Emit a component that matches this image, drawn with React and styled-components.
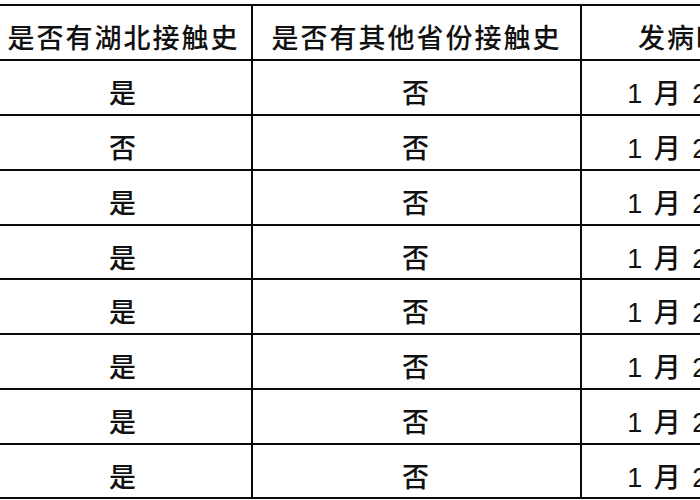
import React from "react";
import styled, { createGlobalStyle } from "styled-components";

const Global = createGlobalStyle`
  html, body { margin: 0; padding: 0; background: #ffffff; }
  body { width: 700px; height: 500px; overflow: hidden; }
`;

const Viewport = styled.div`
  width: 700px;
  height: 500px;
  overflow: hidden;
  background: #fff;
`;

const Table = styled.table`
  border-collapse: separate;
  border-spacing: 0;
  width: ${(p) => p.$width}px;
  min-width: ${(p) => p.$width}px;
  margin: 4px 0 0 -6px;
  border-top: 2px solid #0a0a0a;
  border-left: 2px solid #0a0a0a;
  table-layout: fixed;
  font-family: "Liberation Sans", "Noto Sans CJK SC", sans-serif;
  font-size: 27px;
  color: #111;
`;

const Col = styled.col`
  width: ${(p) => p.$w}px;
`;

const Cell = styled.td`
  box-sizing: border-box;
  height: ${(p) => p.$h}px;
  padding: 14px 0 0 0;
  border-right: 2px solid #0a0a0a;
  border-bottom: 2px solid #0a0a0a;
  text-align: center;
  vertical-align: middle;
  white-space: nowrap;
  overflow: hidden;
  line-height: 1;
  letter-spacing: 2px;
  font-weight: 500;
`;

const HeadCell = styled(Cell).attrs({ as: "th" })`
  font-weight: 500;
`;

const widths = [257, 329, 230];

const rows = [
  ["是", "否", "1 月 21 日", 55],
  ["否", "否", "1 月 22 日", 55],
  ["是", "否", "1 月 23 日", 55],
  ["是", "否", "1 月 22 日", 54],
  ["是", "否", "1 月 24 日", 55],
  ["是", "否", "1 月 25 日", 55],
  ["是", "否", "1 月 23 日", 55],
  ["是", "否", "1 月 26 日", 54],
];

export default function App() {
  return (
    <Viewport>
      <Global />
      <Table $width={widths.reduce((a, b) => a + b, 0) + 2}>
        <colgroup>
          {widths.map((w, i) => (
            <Col key={i} $w={w} />
          ))}
        </colgroup>
        <thead>
          <tr>
            <HeadCell $h={55}>是否有湖北接触史</HeadCell>
            <HeadCell $h={55}>是否有其他省份接触史</HeadCell>
            <HeadCell $h={55}>发病时间</HeadCell>
          </tr>
        </thead>
        <tbody>
          {rows.map(([a, b, c, h], i) => (
            <tr key={i}>
              <Cell $h={h}>{a}</Cell>
              <Cell $h={h}>{b}</Cell>
              <Cell $h={h}>{c}</Cell>
            </tr>
          ))}
        </tbody>
      </Table>
    </Viewport>
  );
}
